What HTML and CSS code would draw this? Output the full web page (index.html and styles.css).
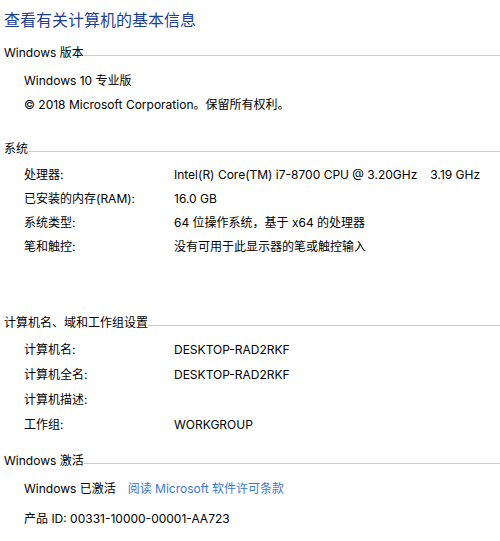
FILE: index.html
```html
<!DOCTYPE html>
<html>
   <head>
      <meta charset="UTF-8">
      <title>系统</title>
      <link rel="stylesheet" href="styles.css">
   </head>
   <body>
      <h1 class="page-title">查看有关计算机的基本信息</h1>

      <div class="group group-edition">
         <h2 class="group-title"><span>Windows 版本</span></h2>
         <div class="row">Windows 10 专业版</div>
         <div class="row">© 2018 Microsoft Corporation。保留所有权利。</div>
      </div>

      <div class="group group-system">
         <h2 class="group-title"><span>系统</span></h2>
         <div class="row"><span class="label">处理器:</span><span class="value">Intel(R) Core(TM) i7-8700 CPU @ 3.20GHz<span class="speed">3.19 GHz</span></span></div>
         <div class="row"><span class="label">已安装的内存(RAM):</span><span class="value">16.0 GB</span></div>
         <div class="row"><span class="label">系统类型:</span><span class="value">64 位操作系统，基于 x64 的处理器</span></div>
         <div class="row"><span class="label">笔和触控:</span><span class="value">没有可用于此显示器的笔或触控输入</span></div>
      </div>

      <div class="group group-name">
         <h2 class="group-title"><span>计算机名、域和工作组设置</span></h2>
         <div class="row"><span class="label">计算机名:</span><span class="value">DESKTOP-RAD2RKF</span></div>
         <div class="row"><span class="label">计算机全名:</span><span class="value">DESKTOP-RAD2RKF</span></div>
         <div class="row"><span class="label">计算机描述:</span><span class="value"></span></div>
         <div class="row"><span class="label">工作组:</span><span class="value">WORKGROUP</span></div>
      </div>

      <div class="group group-activation">
         <h2 class="group-title"><span>Windows 激活</span></h2>
         <div class="row">Windows 已激活<a class="license" href="#">阅读 Microsoft 软件许可条款</a></div>
         <div class="row row-product">产品 ID: 00331-10000-00001-AA723</div>
      </div>
   </body>
</html>
```

FILE: styles.css
```css
*
{
   box-sizing: border-box;
}

body
{
   margin: 0;
   background: #ffffff;
   color: #000000;
   font-family: "Inter", "Noto Sans CJK SC", sans-serif;
   font-size: 12px;
}

.page-title
{
   margin: 8px 0 0 4px;
   height: 24px;
   line-height: 24px;
   font-size: 16px;
   font-weight: normal;
   color: #1e3e96;
}

.group-title
{
   display: flex;
   align-items: center;
   height: 20px;
   margin: 0;
   padding-left: 4px;
   font-size: 12px;
   font-weight: normal;
   line-height: 20px;
}

.group-title::after
{
   content: "";
   flex: 1;
   margin-top: 5px;
   border-top: 1px solid #cccccc;
}

.row
{
   display: flex;
   height: 24px;
   line-height: 24px;
   padding-left: 24px;
   white-space: nowrap;
}

.label
{
   width: 150px;
}

.speed
{
   margin-left: 13px;
}

.license
{
   margin-left: 12px;
   color: #3c78d0;
   text-decoration: none;
}

.group-edition
{
   margin-top: 11px;
}

.group-edition .group-title
{
   margin-bottom: 6px;
}

.group-system
{
   margin-top: 22px;
}

.group-system .group-title
{
   margin-bottom: 4px;
}

.group-name
{
   margin-top: 54px;
}

.group-name .group-title
{
   margin-bottom: 4px;
}

.group-name .row
{
   height: 25px;
   line-height: 25px;
}

.group-activation
{
   margin-top: 14px;
}

.group-activation .group-title
{
   margin-bottom: 6px;
}

.row-product
{
   margin-top: 6px;
}
```
